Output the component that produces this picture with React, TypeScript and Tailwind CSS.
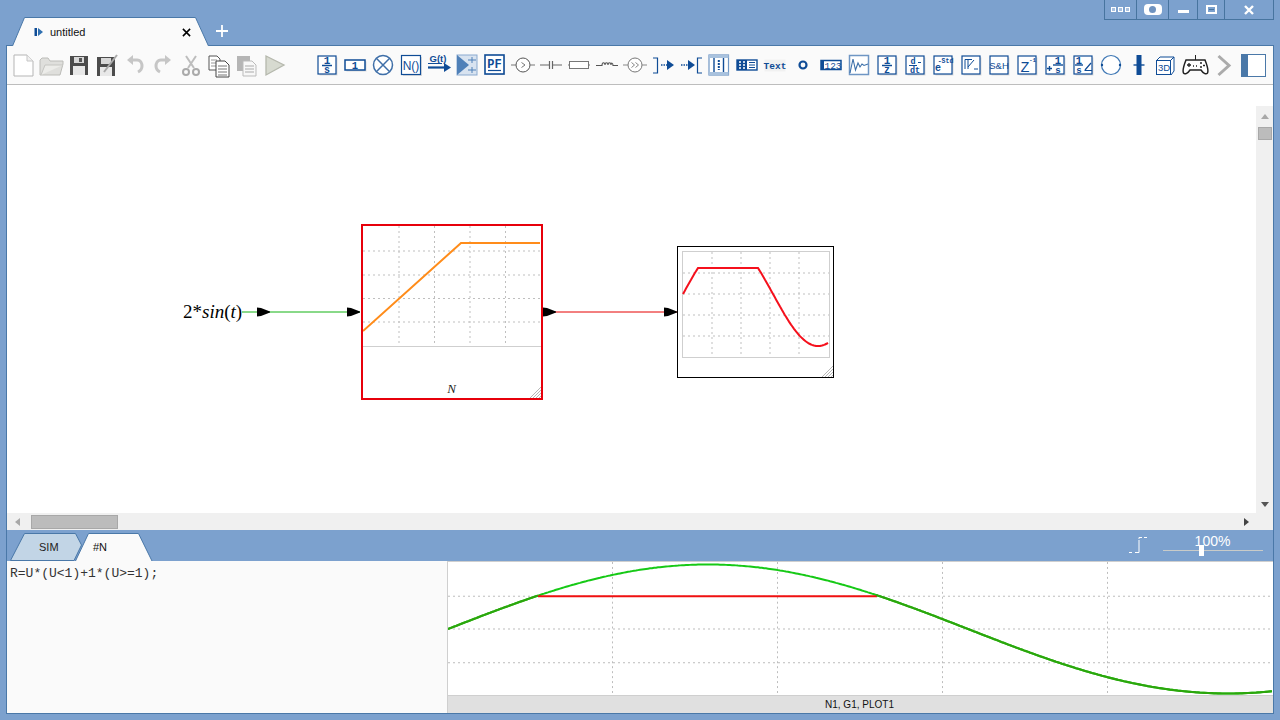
import React from "react";

const B = "#0f4c96";
const mono = "'Liberation Mono', monospace";
const sans = "'Liberation Sans', Arial, sans-serif";

function Ic({ children }: { children?: React.ReactNode }) {
  return (
    <svg viewBox="0 0 28 28" className="w-7 h-7 shrink-0" fill="none" strokeWidth="1">
      {children}
    </svg>
  );
}

function T({ x, y, s = 9, w = 700, f = mono, c = B, a = "middle", children }: any) {
  return (
    <text x={x} y={y} fontSize={s} fontWeight={w} fontFamily={f} fill={c} textAnchor={a}>
      {children}
    </text>
  );
}

function Bx({ x = 5, y = 5, w = 18, h = 18, sw = 1.2 }: any) {
  return (
    <>
      <rect x={x + 1.5} y={y + 1.5} width={w} height={h} fill="#dcdcdc" />
      <rect x={x} y={y} width={w} height={h} fill="#fff" stroke={B} strokeWidth={sw} />
    </>
  );
}

const G = "#8c8c8c";

const leftIcons = [
  <Ic key="new">
    <path d="M5 4H18L24 10V25H5Z" fill="#fff" stroke="#b5b5b5" />
    <path d="M18 4V10H24" fill="#f0f0f0" stroke="#c5c5c5" />
  </Ic>,
  <Ic key="open">
    <path d="M3 9V24H23L26 13V10H13L11 7H5Z" fill="#dfdfdc" stroke="#bcbcb8" />
    <path d="M4 24L8 14H26" stroke="#c5c5c2" fill="#ecece9" />
  </Ic>,
  <Ic key="save">
    <rect x="5" y="5" width="18" height="19" fill="#4c4c4c" />
    <rect x="9" y="6" width="10" height="6" fill="#d8d8d8" />
    <rect x="14" y="7" width="3" height="4" fill="#555" />
    <rect x="8" y="15" width="12" height="9" fill="#e8e8e8" />
  </Ic>,
  <Ic key="saveas">
    <rect x="4" y="6" width="18" height="19" fill="#4c4c4c" />
    <rect x="8" y="7" width="10" height="6" fill="#d8d8d8" />
    <rect x="7" y="16" width="12" height="9" fill="#e8e8e8" />
    <path d="M11 21L24 4" stroke="#aaa" strokeWidth="2" />
  </Ic>,
  <Ic key="undo">
    <path d="M11 9H16C20 9 21 13 21 15C21 18 19 20 17 21" stroke="#c6c6c6" strokeWidth="3" />
    <path d="M6 9L12 4V14Z" fill="#c6c6c6" />
  </Ic>,
  <Ic key="redo">
    <path d="M17 9H12C8 9 7 13 7 15C7 18 9 20 11 21" stroke="#c6c6c6" strokeWidth="3" />
    <path d="M22 9L16 4V14Z" fill="#c6c6c6" />
  </Ic>,
  <Ic key="cut">
    <path d="M9 5L17 17M19 5L11 17" stroke="#bdbdbd" strokeWidth="2" />
    <circle cx="9" cy="21" r="3" stroke="#aaa" strokeWidth="2" />
    <circle cx="19" cy="21" r="3" stroke="#aaa" strokeWidth="2" />
  </Ic>,
  <Ic key="copy">
    <path d="M4 5H12L15 8V19H4Z" fill="#fff" stroke="#555" />
    <path d="M6 9H12M6 12H12M6 15H12" stroke="#999" />
    <path d="M11 10H20L24 14V26H11Z" fill="#fff" stroke="#444" />
    <path d="M13 15H22M13 18H22M13 21H22M13 24H22" stroke="#777" />
  </Ic>,
  <Ic key="paste">
    <rect x="4" y="5" width="13" height="15" fill="#b5b5b5" />
    <path d="M10 10H19L23 14V25H10Z" fill="#f8f8f8" stroke="#bbb" />
    <path d="M12 15H21M12 18H21M12 21H21" stroke="#aaa" />
  </Ic>,
  <Ic key="play">
    <path d="M5 5L23 14L5 24Z" fill="#d7dad0" stroke="#b5b8ad" strokeWidth="1.3" />
  </Ic>,
];

const rightIcons = [
  <Ic key="a1">
    <Bx />
    <T x="14" y="13" s="11">1</T>
    <path d="M9 14.5H19" stroke={B} strokeWidth="1.5" />
    <T x="14" y="22" s="10">s</T>
  </Ic>,
  <Ic key="a2">
    <Bx x={4} y={9} w={20} h={10} sw={1.5} />
    <T x="14" y="17.5" s="10.5">1</T>
  </Ic>,
  <Ic key="a3">
    <circle cx="14" cy="14" r="9.5" fill="#fff" stroke="#3f6fa8" strokeWidth="1.5" />
    <path d="M7.3 7.3L20.7 20.7M20.7 7.3L7.3 20.7" stroke="#3f6fa8" strokeWidth="1.5" />
  </Ic>,
  <Ic key="a4">
    <Bx x={4.5} y={4.5} w={19} h={19} />
    <T x="14" y="18.5" s="12" w={400} f={sans}>N()</T>
  </Ic>,
  <Ic key="a5">
    <T x="13" y="11" s="9.5" f={sans}>G(t)</T>
    <path d="M3 12.5H17" stroke={B} />
    <path d="M3 16.5H21" stroke={B} strokeWidth="2.2" />
    <path d="M19 12L26 16.5L19 21Z" fill={B} />
  </Ic>,
  <Ic key="a6">
    <rect x="4" y="4" width="20" height="20" fill="#d8e3f0" stroke="#8aa9cf" />
    <path d="M4 4L16 14L4 24Z" fill="#4f80b8" />
    <path d="M19 6V12M19 16V22M15 9H23M15 19H23" stroke="#4f80b8" />
  </Ic>,
  <Ic key="a7">
    <rect x="5" y="5" width="19" height="19" fill="#dcdcdc" />
    <rect x="4" y="4" width="19" height="19" fill="#fff" stroke={B} strokeWidth="1.6" />
    <T x="13.5" y="16.5" s="12">PF</T>
    <path d="M7 19.5H20" stroke={B} strokeWidth="1.2" />
  </Ic>,
  <Ic key="a8">
    <circle cx="14" cy="14" r="7" fill="#fff" stroke="#555" />
    <path d="M2 14H7M21 14H26" stroke="#777" />
    <path d="M12.5 11.5L16 14L12.5 16.5" stroke="#777" />
  </Ic>,
  <Ic key="a9">
    <path d="M3 14H12.5M15.5 14H25M12.5 10V18M15.5 10V18" stroke="#666" strokeWidth="1.2" />
  </Ic>,
  <Ic key="a10">
    <rect x="4.5" y="10.5" width="19" height="7" fill="#fff" stroke="#777" />
    <path d="M3 14H4M24 14H25" stroke="#777" />
  </Ic>,
  <Ic key="a11">
    <path d="M3 14.5H9C9 11 12 11 12 14C12 11 15 11 15 14C15 11 18 11 18 14C18 11 20 12 20 14.5H25" stroke="#555" strokeWidth="1.1" />
  </Ic>,
  <Ic key="a12">
    <circle cx="14" cy="14" r="7" fill="#fff" stroke="#777" />
    <path d="M2 14H7M21 14H26" stroke="#888" />
    <path d="M10.5 11.5L13.5 14L10.5 16.5M14.5 11.5L17.5 14L14.5 16.5" stroke="#888" />
  </Ic>,
  <Ic key="a13">
    <path d="M4 7H8.5V22H4" stroke={B} strokeWidth="1.2" />
    <path d="M12 14H18" stroke={B} strokeDasharray="1.5 1" strokeWidth="1.6" />
    <path d="M18 9L25 14L18 19Z" fill={B} />
  </Ic>,
  <Ic key="a14">
    <path d="M4 14H11" stroke={B} strokeDasharray="1.5 1" strokeWidth="1.6" />
    <path d="M11 9L18 14L11 19Z" fill={B} />
    <path d="M25 7H20.5V22H25" stroke={B} strokeWidth="1.2" />
  </Ic>,
  <Ic key="a15">
    <rect x="4" y="4" width="19.5" height="20" fill="#fff" stroke="#6f96c4" strokeWidth="1.2" />
    <rect x="4" y="4" width="19.5" height="3" fill="#a9c2de" />
    <rect x="4" y="21" width="19.5" height="3" fill="#a9c2de" />
    <path d="M9 7V21M18.5 7V21" stroke={B} strokeWidth="1.4" />
    <path d="M13.8 9V19" stroke={B} strokeWidth="2" strokeDasharray="2 1" />
  </Ic>,
  <Ic key="a16">
    <rect x="4" y="9" width="20" height="10" fill="#fff" stroke={B} strokeWidth="1.4" />
    <rect x="4" y="9" width="10" height="10" fill={B} />
    <path d="M6 11H8M10 11H12M6 14H8M10 14H12M6 17H8M10 17H12" stroke="#fff" strokeWidth="1.4" />
    <path d="M16 11.5H22M16 14H22M16 16.5H22" stroke={B} />
  </Ic>,
  <Ic key="a17">
    <rect x="3.5" y="8.5" width="21" height="12" fill="#f1f1f1" />
    <T x="14" y="18" s="9.5">Text</T>
  </Ic>,
  <Ic key="a18">
    <circle cx="14" cy="14" r="3.5" stroke={B} strokeWidth="2.2" />
  </Ic>,
  <Ic key="a19">
    <rect x="4" y="9.5" width="20" height="9" fill="#fff" stroke={B} strokeWidth="1.5" />
    <rect x="4" y="9.5" width="3" height="9" fill={B} />
    <T x="16" y="17.5" s="9.5" w={400}>123</T>
  </Ic>,
  <Ic key="a20">
    <rect x="4.5" y="4.5" width="19" height="19" fill="#fff" stroke="#6f96c4" strokeWidth="1.5" />
    <path d="M5 22L8 8L10.5 19L13 12L15 16L17 13L19 14.5L23 13" stroke="#3b6fa9" strokeWidth="1.1" />
  </Ic>,
  <Ic key="a21">
    <Bx />
    <T x="14" y="13" s="11">1</T>
    <path d="M9 14.5H19" stroke={B} strokeWidth="1.5" />
    <T x="14" y="22" s="10">z</T>
  </Ic>,
  <Ic key="a22">
    <Bx />
    <T x="12" y="12.5" s="8.5">d</T>
    <path d="M8 14.5H16M17 11.5H20" stroke={B} />
    <T x="14" y="21.5" s="8.5">dt</T>
  </Ic>,
  <Ic key="a23">
    <Bx />
    <T x="9" y="20" s="10">e</T>
    <T x="16.5" y="12" s="6.5">-Std</T>
  </Ic>,
  <Ic key="a24">
    <Bx />
    <path d="M8 8.5H15M8 8.5V18M11 8.5V18M11 16L17 9M17 18H21" stroke={B} />
  </Ic>,
  <Ic key="a25">
    <Bx />
    <T x="14" y="17.5" s="9.5" w={400} f={sans}>S&amp;H</T>
  </Ic>,
  <Ic key="a26">
    <Bx />
    <T x="12" y="20.5" s="15" w={400}>Z</T>
    <T x="19.5" y="11" s="6">-1</T>
  </Ic>,
  <Ic key="a27">
    <Bx />
    <T x="17" y="12.5" s="10.5">1</T>
    <path d="M12 14H22" stroke={B} strokeWidth="1.4" />
    <T x="17" y="21.5" s="9">s</T>
    <path d="M6 17.5H11M8.5 15V20" stroke={B} strokeWidth="1.4" />
  </Ic>,
  <Ic key="a28">
    <Bx />
    <T x="10" y="12.5" s="10.5">1</T>
    <path d="M6 14H14" stroke={B} strokeWidth="1.4" />
    <T x="10" y="21.5" s="9">s</T>
    <path d="M16 19L22 12M15.5 19.5H23" stroke={B} strokeWidth="1.2" />
  </Ic>,
  <Ic key="a29">
    <circle cx="14" cy="14" r="9.5" fill="#fff" stroke="#3f78b5" strokeWidth="1.2" />
    <circle cx="5" cy="14" r="1.2" fill={B} />
    <circle cx="23" cy="14" r="1.2" fill={B} />
  </Ic>,
  <Ic key="a30">
    <rect x="11.5" y="4" width="5" height="20" fill={B} />
    <path d="M8.5 14H19.5" stroke={B} strokeWidth="1.4" />
  </Ic>,
  <Ic key="a31">
    <path d="M3.5 9.5L7 6H21V20L18 24" stroke={B} fill="#fff" />
    <rect x="3.5" y="9.5" width="14" height="14" fill="#fff" stroke={B} />
    <path d="M7 6L3.5 9.5M21 6L17.5 9.5" stroke={B} />
    <T x="11" y="20" s="9.5" w={400} f={sans}>3D</T>
  </Ic>,
  <Ic key="a32">
    <path d="M5 9H24C26 14 28 19 26.5 22C25 24 22 22 20 19H9C7 22 4 24 2.5 22C1 19 3 14 5 9Z" fill="#fff" stroke="#222" strokeWidth="1.5" />
    <path d="M14.5 9V4" stroke="#222" />
    <path d="M6 14H10M8 12V16" stroke="#222" strokeWidth="1.3" />
    <path d="M19 12H21M22 14.5H24M19 16H21M12 15H13M15 15H16" stroke="#222" strokeWidth="1.3" />
  </Ic>,
  <Ic key="a33">
    <path d="M9.5 5L20 14.5L9.5 24" stroke="#ababab" strokeWidth="3" />
  </Ic>,
];

function Arrow({ x, y }: { x: number; y: number }) {
  return <path d={`M${x} ${y - 4.5}V${y + 4.5}L${x + 4} ${y + 4}L${x + 13} ${y + 0.5}V${y - 0.5}L${x + 4} ${y - 4}Z`} fill="#000" />;
}

function Grip() {
  return (
    <svg viewBox="0 0 11 11" className="absolute right-0 bottom-0 w-[11px] h-[11px]" stroke="#a5a5a5" strokeWidth="0.8">
      <path d="M0 11L11 0M3 11L11 3M6 11L11 6M9 11L11 9" />
    </svg>
  );
}

const range = (a: number, b: number, step = 1) => Array.from({ length: Math.floor((b - a) / step) + 1 }, (_, i) => a + i * step);

const miniOut = range(683, 828)
  .map((x) => {
    const v = Math.min(1, 2 * Math.sin(((x - 683) / 180) * 2 * Math.PI));
    return `${x - 678},${(294 - 26 * v - 247).toFixed(1)}`;
  })
  .join(" ");

const sinY = (x: number) => 628.5 - 65 * Math.sin(((x - 448) / 1040) * 2 * Math.PI);
const wave = range(448, 1272, 2)
  .map((x) => `${x - 448},${(sinY(x) - 561).toFixed(1)}`)
  .join(" ");
const waveA = range(448, 538, 2)
  .map((x) => `${x - 448},${(sinY(x) - 561).toFixed(1)}`)
  .join(" ");
const waveB = range(876, 1272, 2)
  .map((x) => `${x - 448},${(sinY(x) - 561).toFixed(1)}`)
  .join(" ");

export default function App() {
  return (
    <div className="w-[1280px] h-[720px] bg-[#7ca1ce] flex flex-col overflow-hidden" style={{ fontFamily: sans }}>
      {/* top strip */}
      <div className="h-[45px] shrink-0 relative flex items-end">
        <div className="relative w-[196px] h-[29px] ml-[12px] -mb-px z-10">
          <svg viewBox="0 0 197 29" className="absolute inset-0 w-[197px] h-[29px]">
            <path d="M0.5 29L12.5 0.5H183.5L196.5 29" fill="#fafafa" stroke="#4a78a8" />
          </svg>
          <svg viewBox="0 0 10 10" className="absolute left-[22px] top-[10px] w-[10px] h-[10px]">
            <rect x="0.5" y="1" width="2.5" height="8" fill={B} />
            <path d="M4 1L9 5L4 9Z" fill="#2f6fb0" />
          </svg>
          <span className="absolute left-[38px] top-[8px] text-[11px] leading-[14px] text-[#111]">untitled</span>
          <svg viewBox="0 0 10 10" className="absolute left-[170px] top-[11px] w-[9px] h-[9px]" stroke="#000" strokeWidth="1.7">
            <path d="M1 1L9 9M9 1L1 9" />
          </svg>
        </div>
        <svg viewBox="0 0 12 12" className="ml-[8px] mb-[8px] w-3 h-3" stroke="#fff" strokeWidth="1.8">
          <path d="M6 0V12M0 6H12" />
        </svg>
        <div className="absolute top-0 right-[6px] h-5 flex border border-t-0 border-[#47749f] text-white">
          <div className="w-[32px] flex items-center justify-center gap-[2px] border-r border-[#47749f]">
            <span className="w-[5px] h-[5px] border border-white bg-[#a9c1df]" />
            <span className="w-[5px] h-[5px] border border-white bg-[#a9c1df]" />
            <span className="w-[5px] h-[5px] border border-white bg-[#a9c1df]" />
          </div>
          <div className="w-[32px] flex items-center justify-center border-r border-[#47749f]">
            <span className="w-[18px] h-[11px] rounded-[4px] bg-white flex items-center justify-center">
              <span className="w-[7px] h-[7px] rounded-full bg-[#6f93c0]" />
            </span>
          </div>
          <div className="w-[29px] flex items-center justify-center border-r border-[#47749f]">
            <span className="w-[11px] h-[3px] bg-white mt-[3px]" />
          </div>
          <div className="w-[27px] flex items-center justify-center border-r border-[#47749f]">
            <span className="w-[11px] h-[9px] border-2 border-white flex items-center justify-center" >
              <span className="w-[5px] h-px bg-[#47749f]" />
            </span>
          </div>
          <div className="w-[48px] flex items-center justify-center">
            <svg viewBox="0 0 10 10" className="w-[10px] h-[10px]" stroke="#fff" strokeWidth="2.4">
              <path d="M1 1L9 9M9 1L1 9" />
            </svg>
          </div>
        </div>
      </div>

      {/* window body */}
      <div className="flex-1 min-h-0 ml-[6px] mr-[6px] mb-[6px] border-x border-b border-t border-[#4a78a8] flex flex-col">
        {/* toolbar */}
        <div className="h-[39px] shrink-0 bg-[#fafafa] border-b border-[#bdbdbd] flex items-center pl-[2px]">
          {leftIcons}
          <div className="w-6 shrink-0" />
          {rightIcons}
          <svg viewBox="0 0 25 23" className="ml-[4px] w-[25px] h-[23px] shrink-0">
            <rect x="0" y="0" width="25" height="23" fill="#fff" stroke="#4a78a8" strokeWidth="2" />
            <rect x="0" y="0" width="7" height="23" fill="#4a78a8" />
          </svg>
        </div>

        {/* canvas */}
        <div className="h-[445px] shrink-0 bg-white flex flex-col">
          <div className="flex-1 min-h-0 flex">
            <div className="flex-1 relative overflow-hidden">
              <svg className="absolute left-0 top-0 w-[1249px] h-[428px]" viewBox="7 85 1249 428">
                <path d="M242 312H360" stroke="#12b312" />
                <path d="M543 312H677" stroke="#e60000" />
                <Arrow x={257} y={312} />
                <Arrow x={347} y={312} />
                <Arrow x={543} y={312} />
                <Arrow x={664} y={312} />
              </svg>
              <span className="absolute left-[176px] top-[215px] text-[19px] leading-6 text-black whitespace-nowrap" style={{ fontFamily: "'Liberation Serif', serif" }}>
                2*<i>sin</i>(<i>t</i>)
              </span>

              {/* N block */}
              <div className="absolute left-[354px] top-[139px] w-[182px] h-[176px] border-2 border-red-600 border-[#ff0000] bg-white">
                <svg viewBox="362 226 178 122" className="block w-[178px] h-[122px]">
                  <path d="M398 226V346M433.5 226V346M469 226V346M504.5 226V346M362 251H540M362 275H540M362 298.5H540M362 322H540" stroke="#bfbfbf" strokeDasharray="2 3" />
                  <path d="M362 346.5H540" stroke="#cfcfcf" />
                  <path d="M362 331L460 243H539" stroke="#ff8c1a" strokeWidth="2" fill="none" />
                </svg>
                <div className="text-center text-[13px] leading-4 italic text-[#222] mt-[33px] pr-[1px]" style={{ fontFamily: "'Liberation Serif', serif" }}>N</div>
                <Grip />
              </div>

              {/* Scope block */}
              <div className="absolute left-[670px] top-[161px] w-[157px] h-[132px] border border-black bg-white">
                <svg viewBox="0 0 155 130" className="absolute inset-0 w-[155px] h-[130px]">
                  <rect x="4.5" y="4.5" width="147" height="106" fill="#fff" stroke="#cfcfcf" />
                  <path d="M34 5V110M63 5V110M92 5V110M121 5V110M5 26H151M5 47H151M5 68H151M5 89H151" stroke="#bfbfbf" strokeDasharray="2 3" />
                  <polyline points={miniOut} fill="none" stroke="#f5101c" strokeWidth="2" />
                </svg>
                <Grip />
              </div>
            </div>
            <div className="w-[17px] mt-[21px] bg-[#f0f0f0] flex flex-col items-center relative">
              <svg viewBox="0 0 8 5" className="mt-[8px] w-2 h-[5px]"><path d="M4 0L8 5H0Z" fill="#a8a8a8" /></svg>
              <div className="mt-2 w-[14px] h-[13px] bg-[#bcbcbc] border border-[#a8a8a8]" />
              <svg viewBox="0 0 8 5" className="mt-auto mb-[6px] w-2 h-[5px]"><path d="M0 0H8L4 5Z" fill="#555" /></svg>
            </div>
          </div>
          <div className="h-[17px] shrink-0 bg-[#f0f0f0] flex items-center">
            <svg viewBox="0 0 5 8" className="ml-[8px] w-[5px] h-2"><path d="M5 0V8L0 4Z" fill="#a8a8a8" /></svg>
            <div className="ml-[11px] w-[87px] h-[14px] bg-[#bcbcbc] border border-[#a8a8a8]" />
            <svg viewBox="0 0 5 8" className="ml-auto mr-[24px] w-[5px] h-2"><path d="M0 0V8L5 4Z" fill="#444" /></svg>
          </div>
        </div>

        {/* lower strip */}
        <div className="h-[31px] shrink-0 relative flex items-end">
          <div className="relative w-[72px] h-[28px] ml-[3px] text-[11px]">
            <svg viewBox="0 0 72 28" className="absolute inset-0 w-[72px] h-[28px]">
              <path d="M0.5 27.5L14.5 0.5H65.5L71.5 12L64 27.5Z" fill="#c2d5e6" stroke="#4a78a8" />
            </svg>
            <span className="absolute left-[29px] top-[7px] leading-[14px] text-[#222]">SIM</span>
          </div>
          <div className="relative w-[78px] h-[28px] -ml-[7px] text-[11px]">
            <svg viewBox="0 0 78 28" className="absolute inset-0 w-[78px] h-[28px]">
              <path d="M0.5 28L13.5 0.5H63.5L77 28" fill="#fafafa" stroke="#4a78a8" />
            </svg>
            <span className="absolute left-[18px] top-[7px] leading-[14px] text-[#111]">#N</span>
          </div>
          <svg viewBox="0 0 19 16" className="absolute left-[1122px] top-[7px] w-[19px] h-4" stroke="#fff" fill="none">
            <path d="M0 15.5H3M6 15.5H10V3M10 0.5H13M15 0.5H18" />
            <path d="M10 0.5V2" />
          </svg>
          <div className="absolute left-[1156px] top-[3px] w-[100px] h-[26px]">
            <div className="text-center text-[14px] leading-[16px] text-white pr-[1px]">100%</div>
            <div className="absolute left-0 right-0 top-[17px] h-px bg-[#c9cbc8]" />
            <div className="absolute left-[36px] top-[12px] w-[5px] h-[11px] bg-white" />
          </div>
        </div>

        {/* lower panel */}
        <div className="flex-1 min-h-0 flex bg-[#fafafa]">
          <div className="w-[440px] shrink-0 pl-[3px] pt-[5px] text-[13px] leading-4 text-[#333] whitespace-pre" style={{ fontFamily: mono }}>
            {"R=U*(U<1)+1*(U>=1);"}
          </div>
          <div className="flex-1 flex flex-col border-l border-[#cfcfcf] bg-white min-w-0">
            <svg viewBox="448 561 825 134" className="w-[825px] h-[134px] shrink-0 border-t border-[#cfcfcf]" preserveAspectRatio="none">
              <path d="M612.5 561V695M777.5 561V695M942.5 561V695M1107.5 561V695M448 595.5H1273M448 628.5H1273M448 662.5H1273" stroke="#bdbdbd" strokeDasharray="2 3" />
              <g transform="translate(448 561)">
                <polyline points={wave} fill="none" stroke="#16c916" strokeWidth="2" />
                <path d="M90 34.5H429" stroke="#f01010" strokeWidth="2" />
                <polyline points={waveA} fill="none" stroke="#2ca60c" strokeWidth="2.2" />
                <polyline points={waveB} fill="none" stroke="#2ca60c" strokeWidth="2.2" />
              </g>
            </svg>
            <div className="flex-1 bg-[#e0e0e0] border-t border-[#cfcfcf] flex items-center justify-center text-[10px] text-[#111] pr-[2px]">
              N1, G1, PLOT1
            </div>
          </div>
        </div>
      </div>
    </div>
  );
}
